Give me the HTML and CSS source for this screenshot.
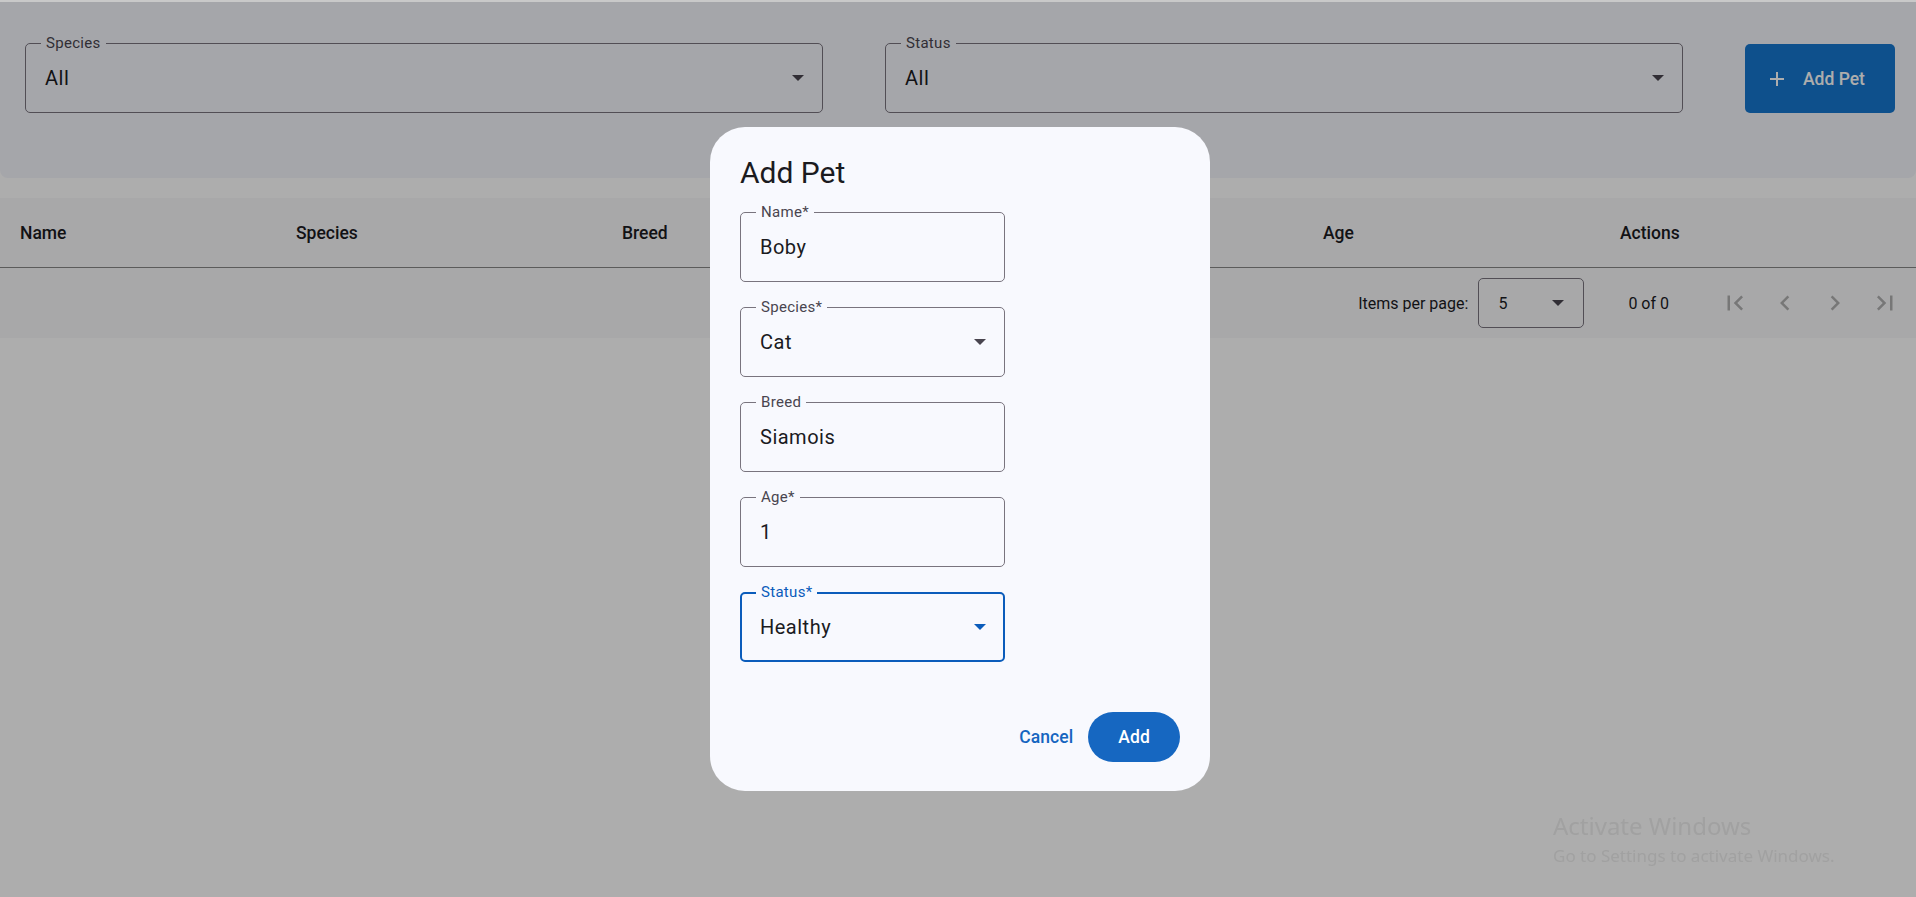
FILE: index.html
```html
<!DOCTYPE html>
<html lang="en">
<head>
<meta charset="utf-8">
<title>Pets</title>
<link rel="stylesheet" href="styles.css">
</head>
<body>
<div class="topline"></div>
<main class="page">
  <section class="filters">
    <fieldset class="field">
      <legend>Species</legend>
      <div class="field-value"><span>All</span><span class="arrow"></span></div>
    </fieldset>
    <fieldset class="field">
      <legend>Status</legend>
      <div class="field-value"><span>All</span><span class="arrow"></span></div>
    </fieldset>
    <button class="add-btn" type="button">
      <svg class="plus" width="14" height="14" viewBox="0 0 14 14"><path d="M7 0v14M0 7h14" stroke="currentColor" stroke-width="2"/></svg>
      <span>Add Pet</span>
    </button>
  </section>

  <section class="table">
    <div class="thead">
      <div>Name</div>
      <div>Species</div>
      <div>Breed</div>
      <div>Status</div>
      <div>Age</div>
      <div>Actions</div>
    </div>
    <div class="paginator">
      <span class="pg-label">Items per page:</span>
      <div class="pg-select"><span>5</span><span class="arrow"></span></div>
      <span class="pg-range">0 of 0</span>
      <button class="pg-btn" type="button" aria-label="First page"><svg viewBox="0 0 24 24"><path d="M18.41 16.59L13.82 12l4.59-4.59L17 6l-6 6 6 6zM6 6h2v12H6z"/></svg></button>
      <button class="pg-btn" type="button" aria-label="Previous page"><svg viewBox="0 0 24 24"><path d="M15.41 7.41L14 6l-6 6 6 6 1.41-1.41L10.83 12z"/></svg></button>
      <button class="pg-btn" type="button" aria-label="Next page"><svg viewBox="0 0 24 24"><path d="M10 6L8.59 7.41 13.17 12l-4.58 4.59L10 18l6-6z"/></svg></button>
      <button class="pg-btn" type="button" aria-label="Last page"><svg viewBox="0 0 24 24"><path d="M5.59 7.41L10.18 12l-4.59 4.59L7 18l6-6-6-6zM16 6h2v12h-2z"/></svg></button>
    </div>
  </section>
</main>

<div class="backdrop"></div>

<div class="dialog-wrap">
  <div class="dialog">
    <h2 class="dialog-title">Add Pet</h2>
    <div class="dialog-fields">
      <fieldset class="field">
        <legend>Name*</legend>
        <div class="field-value"><span>Boby</span></div>
      </fieldset>
      <fieldset class="field">
        <legend>Species*</legend>
        <div class="field-value"><span>Cat</span><span class="arrow"></span></div>
      </fieldset>
      <fieldset class="field">
        <legend>Breed</legend>
        <div class="field-value"><span>Siamois</span></div>
      </fieldset>
      <fieldset class="field">
        <legend>Age*</legend>
        <div class="field-value"><span>1</span></div>
      </fieldset>
      <fieldset class="field field--focused">
        <legend>Status*</legend>
        <div class="field-value"><span>Healthy</span><span class="arrow"></span></div>
      </fieldset>
    </div>
    <div class="dialog-actions">
      <button class="btn-text" type="button">Cancel</button>
      <button class="btn-filled" type="button">Add</button>
    </div>
  </div>
</div>

<div class="watermark">
  <div class="wm-title">Activate Windows</div>
  <div class="wm-sub">Go to Settings to activate Windows.</div>
</div>
</body>
</html>
```

FILE: styles.css
```css
* { box-sizing: border-box; }

html, body {
  margin: 0;
  padding: 0;
  background: #ffffff;
  font-family: Roboto, "Liberation Sans", sans-serif;
  color: #1b1b1f;
  overflow: hidden;
}

button {
  font-family: inherit;
  cursor: pointer;
}

.topline {
  height: 2px;
  background: #c9c9c9;
}

.page {
  height: 895px;
}

/* ---------- filter panel ---------- */
.filters {
  display: flex;
  align-items: flex-start;
  gap: 62px;
  height: 176px;
  padding: 33px 21px 0 25px;
  background: #f4f5fb;
  border-radius: 0 0 8px 8px;
}

.filters .field {
  flex: 1;
}

/* ---------- outlined field (fieldset notch) ---------- */
.field {
  margin: 0;
  min-width: 0;
  height: 78px;
  padding: 11px 18px 19px 19px;
  border: 1px solid #79747e;
  border-radius: 5px;
}

.field legend {
  margin-left: -4px;
  padding: 0 5px;
  font-size: 15px;
  line-height: 17px;
  color: #49454f;
  letter-spacing: 0.3px;
}

.field-value {
  display: flex;
  align-items: center;
  justify-content: space-between;
  height: 30px;
  font-size: 20px;
  line-height: 30px;
  color: #1b1b1f;
  letter-spacing: 0.5px;
}

.arrow {
  width: 0;
  height: 0;
  border-left: 6px solid transparent;
  border-right: 6px solid transparent;
  border-top: 6px solid #49454f;
}

.field--focused {
  border: 2px solid #0b5cbb;
  padding: 11px 17px 18px 18px;
}

.field--focused legend {
  color: #0b5cbb;
}

.field--focused .arrow {
  border-top-color: #0b5cbb;
}

.add-btn {
  flex: none;
  display: flex;
  align-items: center;
  gap: 19px;
  width: 150px;
  height: 69px;
  margin-top: 9px;
  padding: 0 30px 0 25px;
  border: none;
  border-radius: 5px;
  background: #1676ce;
  color: #ffffff;
  font-size: 17.5px;
  font-weight: 500;
}

.plus {
  flex: none;
}

/* ---------- table ---------- */
.table {
  margin-top: 20px;
  background: #f8f8fa;
}

.thead {
  display: grid;
  grid-template-columns: 276px 326px 353px 348px 297px 1fr;
  align-items: center;
  height: 70px;
  padding-left: 20px;
  border-bottom: 1px solid #868686;
  font-size: 17.5px;
  font-weight: 500;
  color: #1b1b1f;
}

.paginator {
  display: flex;
  align-items: center;
  justify-content: flex-end;
  height: 70px;
  padding-right: 6px;
  font-size: 16px;
  color: #1b1b1f;
}

.pg-label {
  margin-right: 10px;
}

.pg-select {
  display: flex;
  align-items: center;
  justify-content: space-between;
  width: 106px;
  height: 50px;
  padding: 0 19px 0 19px;
  border: 1px solid #79747e;
  border-radius: 5px;
}

.pg-range {
  margin: 0 41px 0 44px;
}

.pg-btn {
  display: flex;
  align-items: center;
  justify-content: center;
  width: 50px;
  height: 50px;
  padding: 0;
  border: none;
  background: none;
}

.pg-btn svg {
  width: 30px;
  height: 30px;
  fill: #b0b0b0;
}

/* ---------- backdrop & dialog ---------- */
.backdrop {
  position: fixed;
  top: 2px;
  left: 0;
  right: 0;
  bottom: 0;
  background: rgba(0, 0, 0, 0.32);
}

.dialog-wrap {
  position: fixed;
  inset: 0;
  display: flex;
  justify-content: center;
  align-items: flex-start;
  padding-top: 127px;
  padding-left: 4px;
}

.dialog {
  width: 500px;
  padding: 26px 30px 29px;
  border-radius: 35px;
  background: #f8f9fe;
}

.dialog-title {
  margin: 0;
  font-size: 30px;
  line-height: 40px;
  font-weight: 400;
  color: #1b1b1f;
}

.dialog-fields {
  display: flex;
  flex-direction: column;
  gap: 17px;
  margin-top: 11px;
}

.dialog-fields .field {
  width: 265px;
}

.dialog-actions {
  display: flex;
  justify-content: flex-end;
  margin-top: 50px;
}

.btn-text,
.btn-filled {
  height: 50px;
  border: none;
  border-radius: 25px;
  font-size: 17.5px;
  font-weight: 500;
  letter-spacing: 0.1px;
}

.btn-text {
  padding: 0 15px;
  background: none;
  color: #1565c0;
}

.btn-filled {
  padding: 0 30px;
  background: #1667c1;
  color: #ffffff;
}

/* ---------- OS watermark ---------- */
.watermark {
  position: fixed;
  left: 1553px;
  top: 810px;
  font-family: "Noto Sans", "Open Sans", sans-serif;
  color: #a1a1a1;
  pointer-events: none;
}

.wm-title {
  font-size: 24px;
  line-height: 32px;
}

.wm-sub {
  margin-top: 3px;
  font-size: 17px;
  line-height: 22px;
}
```
